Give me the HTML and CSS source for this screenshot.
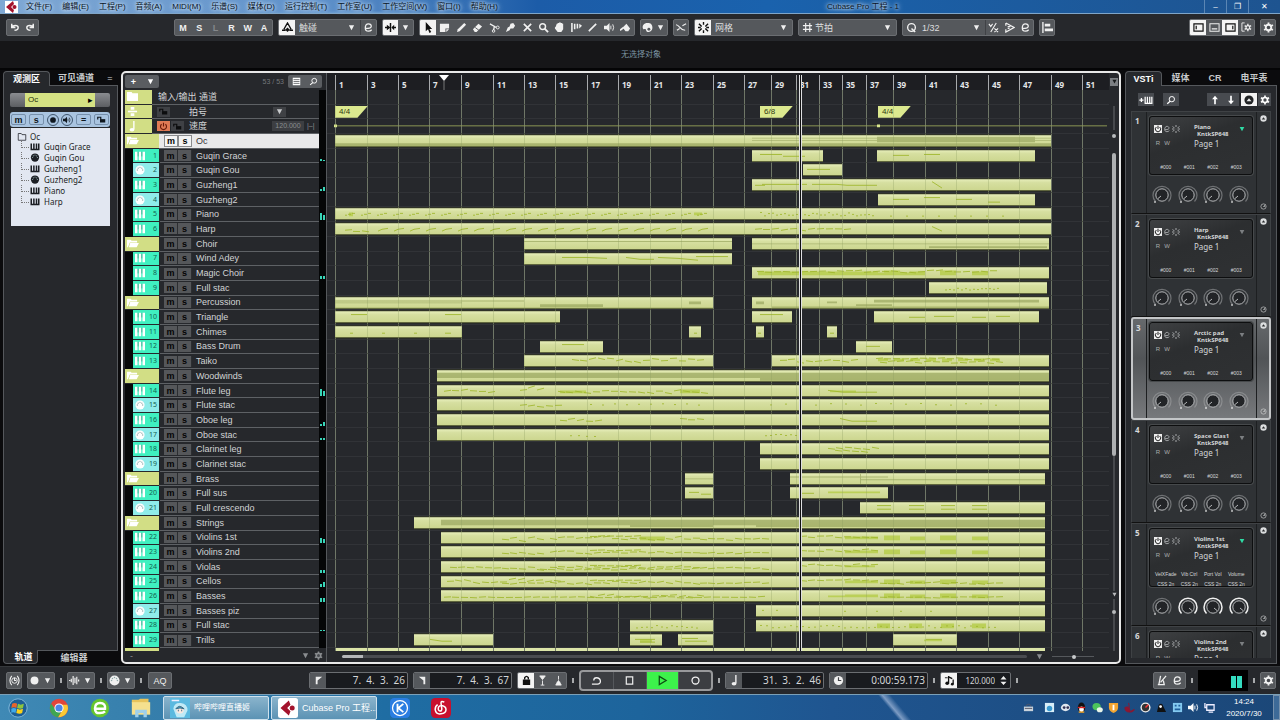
FILE: index.html
```html
<!DOCTYPE html>
<html lang="zh-CN">
<head>
<meta charset="utf-8">
<title>Cubase Pro 工程 - 1</title>
<link rel="stylesheet" href="styles.css">
</head>
<body>
<svg class="sprite" aria-hidden="true">
  <symbol id="cubase" viewBox="0 0 12 12"><path d="M7 0 0 6l7 6 1-3-3-3 3-3z" fill="#a3122c"/><circle cx="8.500" cy="6" r="2" fill="#a3122c"/></symbol>
  <symbol id="undo" viewBox="0 0 12 12"><path d="M3 2v4h4M3 6c1-3 7-3 7 0 0 2-1 3-4 3" fill="none" stroke="currentColor" stroke-width="1.600"/></symbol>
  <symbol id="redo" viewBox="0 0 12 12"><path d="M9 2v4H5M9 6C8 3 2 3 2 6c0 2 1 3 4 3" fill="none" stroke="currentColor" stroke-width="1.600"/></symbol>
  <symbol id="auto" viewBox="0 0 12 12"><path d="M2 8 6 1l4 7M0 9h4M8 9h4" fill="none" stroke="currentColor" stroke-width="1.400"/><path d="M6 6l2.500 2.500L6 11 3.500 8.500z" fill="currentColor"/></symbol>
  <symbol id="edit" viewBox="0 0 12 12"><path d="M3 7c5 0 6-1 6-2.500S7.500 2 6 2C4 2 2.500 4 2.500 6.500S4 10 6 10c1.500 0 2.500-.5 3.500-1.500" fill="none" stroke="currentColor" stroke-width="1.400"/></symbol>
  <symbol id="scroll" viewBox="0 0 12 12"><path d="M6 1v10M0 6h4M8 6h4" stroke="currentColor" stroke-width="1.600"/><path d="M2 3l4 3-4 3zM10 3v6L7 6z" fill="currentColor"/></symbol>
  <symbol id="down" viewBox="0 0 12 12"><path d="M2.500 3h7L6 9.500z" fill="currentColor"/></symbol>
  <symbol id="up" viewBox="0 0 12 12"><path d="M6 1 2.500 5H5v6h2V5h2.500z" fill="currentColor"/></symbol>
  <symbol id="dn" viewBox="0 0 12 12"><path d="M6 11 2.500 7H5V1h2v6h2.500z" fill="currentColor"/></symbol>
  <symbol id="arrow" viewBox="0 0 12 12"><path d="M3 0v10l2.500-2 1.500 4 2-1-2-3.500h3z" fill="currentColor"/></symbol>
  <symbol id="range" viewBox="0 0 12 12"><path d="M1 2h10v5H7v4H1z" fill="currentColor"/><path d="M8 8h3L8 11z" fill="currentColor"/></symbol>
  <symbol id="pencil" viewBox="0 0 12 12"><path d="M1 11l1-3 7-7 2 2-7 7z" fill="currentColor"/></symbol>
  <symbol id="eraser" viewBox="0 0 12 12"><path d="M1 8l6-6 4 3-6 6H3z" fill="currentColor"/><path d="M3.500 6l4 3" stroke="#55585c"/></symbol>
  <symbol id="cut" viewBox="0 0 12 12"><path d="M1 2l7 4M5 9l1-5" fill="none" stroke="currentColor" stroke-width="1.400"/><circle cx="9.500" cy="6" r="1.600" fill="none" stroke="currentColor"/><circle cx="5" cy="9.800" r="1.400" fill="none" stroke="currentColor"/></symbol>
  <symbol id="glue" viewBox="0 0 12 12"><path d="M1 11l2-5 2-1 1-3 3-1 2 3-2 3-3 0-1 2z" fill="currentColor"/></symbol>
  <symbol id="mute" viewBox="0 0 12 12"><path d="M2 2l8 8M10 2l-8 8" stroke="currentColor" stroke-width="1.800"/></symbol>
  <symbol id="lens" viewBox="0 0 12 12"><circle cx="5" cy="5" r="3.200" fill="none" stroke="currentColor" stroke-width="1.600"/><path d="M7 7l4 4" stroke="currentColor" stroke-width="2"/></symbol>
  <symbol id="find" viewBox="0 0 12 12"><circle cx="7" cy="5" r="3.200" fill="none" stroke="currentColor" stroke-width="1.200"/><path d="M5 7.500l-3.500 3" stroke="currentColor" stroke-width="1.400"/></symbol>
  <symbol id="hand" viewBox="0 0 12 12"><path d="M2 5l1-3h1V1h2V0h1v1h2v1h1v6L8 11H4L1 7V6z" fill="currentColor"/></symbol>
  <symbol id="comp" viewBox="0 0 12 12"><path d="M1 1v10M4 2v6M7 2v5" stroke="currentColor" stroke-width="1.700"/><path d="M9 2l3 2-3 3z" fill="currentColor"/></symbol>
  <symbol id="line" viewBox="0 0 12 12"><path d="M2 10l8-8" stroke="currentColor" stroke-width="1.800"/></symbol>
  <symbol id="sound" viewBox="0 0 12 12"><path d="M0 4h3l3-3v10L3 8H0z" fill="currentColor"/><path d="M7.500 4v4M9.500 2.500q2 3.500 0 7" stroke="currentColor" fill="none"/></symbol>
  <symbol id="bucket" viewBox="0 0 12 12"><path d="M3 6l4-4 4 5-2 3-3 0z" fill="currentColor"/><path d="M0 9l4-3" stroke="currentColor" stroke-width="1.800"/></symbol>
  <symbol id="palette" viewBox="0 0 12 12"><path d="M6 1C2 1 0 4 1 7c1 2 2 0 3 1s0 3 3 3c4-1 5-4 4-7S8 1 6 1z" fill="currentColor"/><circle cx="7.500" cy="8" r="1.600" fill="#55585c"/></symbol>
  <symbol id="xfade" viewBox="0 0 12 12"><path d="M0 3c4 0 4 6 10 6M1 9l3-2M7 4l4-2" fill="none" stroke="currentColor" stroke-width="1.300"/></symbol>
  <symbol id="snap" viewBox="0 0 12 12"><path d="M6 0v3M6 9v3M1 2l3 3M11 2L8 5M1 10l3-3M11 10L8 7M0 6h3M9 6h3" stroke="currentColor" stroke-width="1.500"/></symbol>
  <symbol id="grid" viewBox="0 0 12 12"><path d="M4 1v10M8.500 1v10M1 4h10M1 8h10" stroke="currentColor" stroke-width="1.300"/></symbol>
  <symbol id="quant" viewBox="0 0 12 12"><circle cx="6" cy="6" r="4.200" fill="none" stroke="currentColor" stroke-width="1.500"/><path d="M6 7l4 4" stroke="currentColor" stroke-width="1.600"/></symbol>
  <symbol id="iter" viewBox="0 0 12 12"><path d="M3 11l6-10M1 2l2 3 2-3M7 7l4 4M11 7l-4 4" fill="none" stroke="currentColor" stroke-width="1.200"/></symbol>
  <symbol id="groove" viewBox="0 0 12 12"><path d="M2 1l9 5-9 5V8M2 1v3M4 5h3M4 7h2" fill="none" stroke="currentColor" stroke-width="1.300"/></symbol>
  <symbol id="align" viewBox="0 0 12 12"><path d="M1 0v12" stroke="currentColor" stroke-width="1.500"/><path d="M3 2h6v3H3zM3 7h9v3H3z" fill="currentColor"/></symbol>
  <symbol id="zl" viewBox="0 0 12 12"><path d="M1 2h10v8H1zM3.500 4v4" fill="none" stroke="currentColor" stroke-width="1.300"/></symbol>
  <symbol id="zb" viewBox="0 0 12 12"><path d="M1 2h10v8H1zM3 7.500h6" fill="none" stroke="currentColor" stroke-width="1.100"/></symbol>
  <symbol id="zr" viewBox="0 0 12 12"><path d="M1 2h10v8H1zM8.500 4v4" fill="none" stroke="currentColor" stroke-width="1.300"/></symbol>
  <symbol id="zset" viewBox="0 0 12 12"><path d="M4 1H1v9h3" fill="none" stroke="currentColor"/><path d="M7.500 2v8M4 4l7 4M4 8l7-4" stroke="currentColor" stroke-width="1.500"/><circle cx="7.500" cy="6" r="2" fill="#55585c" stroke="currentColor" stroke-width="1.200"/></symbol>
  <symbol id="gear" viewBox="0 0 12 12"><path d="M6 0.500v11M1.200 3.200l9.600 5.600M1.200 8.800l9.600-5.600" stroke="currentColor" stroke-width="2"/><circle cx="6" cy="6" r="3" fill="#484b50" stroke="currentColor" stroke-width="2"/></symbol>
  <symbol id="list" viewBox="0 0 12 12"><path d="M1 1h10v10H1z" fill="currentColor"/><path d="M2 3.500h8M2 6h8M2 8.500h8" stroke="#4a4c50"/></symbol>
  <symbol id="keys" viewBox="0 0 12 12"><path d="M0 1h3v10H0zM4.500 1h3v10h-3zM9 1h3v10H9z" fill="currentColor"/><path d="M3.700 1v5.500M8.200 1v5.500" stroke="#0b0b0b" stroke-opacity=".35"/></symbol>
  <symbol id="bkeys" viewBox="0 0 12 12"><path d="M1 2v8h10V2M4.500 2v8M8 2v8" fill="none" stroke="currentColor" stroke-width="2"/></symbol>
  <symbol id="addkeys" viewBox="0 0 16 12"><path d="M0 6h5M2.500 3.500v5M7 2v8h8V2M9.700 2v8M12.500 2v8" fill="none" stroke="currentColor" stroke-width="1.500"/></symbol>
  <symbol id="midi" viewBox="0 0 12 12"><circle cx="6" cy="6" r="5.500" fill="currentColor"/><g fill="#8fa8a8"><circle cx="2.800" cy="6" r=".8"/><circle cx="3.800" cy="3.800" r=".8"/><circle cx="6" cy="2.800" r=".8"/><circle cx="8.200" cy="3.800" r=".8"/><circle cx="9.200" cy="6" r=".8"/></g></symbol>
  <symbol id="folder" viewBox="0 0 14 12"><path d="M1 2h4l1 1h6v2H4l-2 5H1z" fill="currentColor"/><path d="M4.500 5.500H14L11.500 10H3z" fill="currentColor"/></symbol>
  <symbol id="closed" viewBox="0 0 14 12"><path d="M1 1h5l1 1.500h6V11H1z" fill="currentColor"/></symbol>
  <symbol id="ofolder" viewBox="0 0 12 12"><path d="M1 2h4l1 1.500h5V11H1z" fill="none" stroke="currentColor"/></symbol>
  <symbol id="sig" viewBox="0 0 12 12"><path d="M1 6h10" stroke="currentColor" stroke-width="1.800"/><path d="M4 1h4v3H4zM4 8h4v3H4z" fill="currentColor"/></symbol>
  <symbol id="note" viewBox="0 0 12 12"><path d="M7.500 0v9" stroke="currentColor" stroke-width="1.500"/><ellipse cx="5.500" cy="9.500" rx="2.600" ry="2" fill="currentColor"/></symbol>
  <symbol id="notes" viewBox="0 0 12 12"><path d="M5 1v8M5 2l4 2M10 5v5" stroke="currentColor" stroke-width="1.400"/><circle cx="3.500" cy="9" r="2" fill="currentColor"/><circle cx="9" cy="10" r="1.500" fill="currentColor"/><path d="M1 3h3" stroke="currentColor"/></symbol>
  <symbol id="unlock" viewBox="0 0 12 12"><path d="M1 6V3h4v3" fill="none" stroke="currentColor" stroke-width="1.600"/><path d="M4 5.500h7V10H4z" fill="currentColor"/></symbol>
  <symbol id="lock" viewBox="0 0 12 12"><path d="M2 5h8v6H2z" fill="currentColor"/><path d="M4 5V3q2-3 4 0v2" fill="none" stroke="currentColor" stroke-width="1.500"/></symbol>
  <symbol id="power" viewBox="0 0 12 12"><path d="M6 1v5M3.500 3A4 4 0 1 0 8.500 3" fill="none" stroke="currentColor" stroke-width="1.500"/></symbol>
  <symbol id="wave" viewBox="0 0 12 12"><path d="M0 6h1.500M2.500 4v4M4.500 1v10M6.500 3v6M8.500 2v8M10.500 5v2" stroke="currentColor" stroke-width="1.300"/></symbol>
  <symbol id="sync" viewBox="0 0 12 12"><path d="M3 1Q-1 6 3 11M9 1q4 5 0 10M6 3v3h2" fill="none" stroke="currentColor" stroke-width="1.200"/><circle cx="6" cy="6" r="3" fill="none" stroke="currentColor"/></symbol>
  <symbol id="dot" viewBox="0 0 12 12"><circle cx="6" cy="6" r="4.300" fill="currentColor"/></symbol>
  <symbol id="locl" viewBox="0 0 12 12"><path d="M3 2h7L5 6v4H3z" fill="currentColor"/></symbol>
  <symbol id="locr" viewBox="0 0 12 12"><path d="M9 2H2l5 4v4h2z" fill="currentColor"/></symbol>
  <symbol id="pin" viewBox="0 0 12 12"><path d="M3 1h6L6 5zM6 6v5M4 11h4" stroke="currentColor" fill="currentColor"/></symbol>
  <symbol id="pout" viewBox="0 0 12 12"><path d="M3 11h6L6 6zM6 5V1M4 8h4" stroke="currentColor" fill="currentColor"/></symbol>
  <symbol id="cycle" viewBox="0 0 12 12"><path d="M1 10h6c5 0 4-7-1-7-2 0-3 1-3 3" fill="none" stroke="currentColor" stroke-width="1.400"/></symbol>
  <symbol id="stop" viewBox="0 0 12 12"><path d="M2.500 2h7v8h-7z" fill="none" stroke="currentColor" stroke-width="1.300"/></symbol>
  <symbol id="play" viewBox="0 0 12 12"><path d="M2.500 1.500 10 6l-7.500 4.500z" fill="none" stroke="currentColor" stroke-width="1.400"/></symbol>
  <symbol id="rec" viewBox="0 0 12 12"><circle cx="6" cy="6" r="3.800" fill="none" stroke="currentColor" stroke-width="1.400"/></symbol>
  <symbol id="clock" viewBox="0 0 12 12"><circle cx="6" cy="6" r="5" fill="currentColor"/><path d="M6 2.500V6h3" stroke="#404246" stroke-width="1.300" fill="none"/></symbol>
  <symbol id="metro" viewBox="0 0 12 12"><path d="M3 11 5 1M2 10.500h7L8 6M5 8l6-7" fill="none" stroke="currentColor" stroke-width="1.400"/></symbol>
  <symbol id="updown" viewBox="0 0 12 12"><path d="M6 0l4 4.500H2zM6 12l4-4.500H2z" fill="currentColor"/></symbol>
  <symbol id="cap" viewBox="0 0 12 12"><circle cx="6" cy="6" r="5.500" fill="currentColor"/><path d="M3 7.500h6L6 4z" fill="#eceded"/></symbol>
  <symbol id="capw" viewBox="0 0 12 12"><circle cx="6" cy="6" r="5.500" fill="currentColor"/><path d="M3 7.500h6L6 4z" fill="#2b2d2f"/></symbol>
  <symbol id="turn" viewBox="0 0 12 12"><circle cx="6" cy="6" r="4.500" fill="none" stroke="currentColor"/><path d="M6 6l3-3M6 6h3" stroke="currentColor"/></symbol>
  <symbol id="knob" viewBox="0 0 20 20"><path d="M3.500 16.500a9 9 0 1 1 13 0" fill="none" stroke="currentColor" stroke-width="1.200" opacity=".55"/><circle cx="10" cy="10" r="6.200" fill="#222427" stroke="#b8babc"/><path d="M9 11l-3 2.500" stroke="#b8babc"/><path d="M2 17h2" stroke="#fff"/></symbol>
  <symbol id="knobfull" viewBox="0 0 20 20"><path d="M3.500 16.500a9 9 0 1 1 13 0" fill="none" stroke="#f0f0f0" stroke-width="1.500"/><circle cx="10" cy="10" r="6.200" fill="#222427" stroke="#b8babc"/><path d="M11 11l3 2.500" stroke="#b8babc"/></symbol>
</svg>

<header class="titlebar">
  <span class="logo"><svg><use href="#cubase"/></svg></span>
  <nav class="menu" id="menu"></nav>
  <h1>Cubase Pro 工程 - 1</h1>
  <div class="wincontrols"><button aria-label="最小化">–</button><button aria-label="还原">❐</button><button aria-label="关闭">✕</button></div>
</header>

<div class="toolbar">
  <div class="group g-undo"><button aria-label="撤销"><svg><use href="#undo"/></svg></button><button aria-label="重做"><svg><use href="#redo"/></svg></button></div>
  <div class="group g-state"><button>M</button><button>S</button><button class="off">L</button><button>R</button><button>W</button><button>A</button></div>
  <div class="group g-wide"><button class="on" aria-label="自动化"><svg><use href="#auto"/></svg></button><select aria-label="自动化模式"><option>触碰</option></select><svg><use href="#down"/></svg><button class="sep" aria-label="编辑"><svg><use href="#edit"/></svg></button></div>
  <div class="group g-scroll"><button class="on" aria-label="自动滚动"><svg><use href="#scroll"/></svg></button><button aria-label="滚动选项"><svg><use href="#down"/></svg></button></div>
  <div class="group g-tools" id="tools"></div>
  <div class="group g-color"><button aria-label="颜色"><svg><use href="#palette"/></svg></button><button aria-label="颜色菜单"><svg><use href="#down"/></svg></button></div>
  <div class="group g-one"><button aria-label="过零点"><svg><use href="#xfade"/></svg></button></div>
  <div class="group g-wide"><button class="on" aria-label="吸附"><svg><use href="#snap"/></svg></button><select aria-label="吸附类型"><option>网格</option></select><svg><use href="#down"/></svg></div>
  <div class="group g-wide tight"><button aria-label="网格类型图标"><svg><use href="#grid"/></svg></button><select aria-label="网格类型"><option>节拍</option></select><svg><use href="#down"/></svg></div>
  <div class="group g-quant"><button aria-label="量化"><svg><use href="#quant"/></svg></button><select aria-label="量化值"><option>1/32</option></select><svg><use href="#down"/></svg><button class="sep" aria-label="迭代量化"><svg><use href="#iter"/></svg></button><button aria-label="应用量化"><svg><use href="#groove"/></svg></button><button aria-label="量化面板"><svg><use href="#edit"/></svg></button></div>
  <div class="group g-one"><button aria-label="对齐"><svg><use href="#align"/></svg></button></div>
  <div class="group g-zones"><button class="on" aria-label="左区"><svg><use href="#zl"/></svg></button><button aria-label="下区"><svg><use href="#zb"/></svg></button><button class="on" aria-label="右区"><svg><use href="#zr"/></svg></button><button aria-label="区域设置"><svg><use href="#zset"/></svg></button></div>
  <div class="group g-one"><button aria-label="设置"><svg><use href="#gear"/></svg></button></div>
</div>

<div class="infoline">无选择对象</div>

<main class="work">
  <aside class="side inspector">
    <div class="tabs"><button class="tab active">观测区</button><button class="tab">可见通道</button><button class="more" aria-label="更多">=</button></div>
    <div class="side-body">
      <button class="track-name"><span>Oc</span><span class="tri">▸</span></button>
      <div class="track-ctl">
        <button class="cap">m</button><button class="cap">s</button><button class="round" aria-label="录音"><svg><use href="#dot"/></svg></button><button class="round" aria-label="监听"><svg><use href="#sound"/></svg></button><button class="cap">=</button><button class="cap" aria-label="锁定"><svg><use href="#unlock"/></svg></button>
      </div>
      <ul class="tree">
        <li class="root"><svg><use href="#ofolder"/></svg>Oc</li>
        <li><svg><use href="#bkeys"/></svg>Guqin Grace</li>
        <li><svg><use href="#midi"/></svg>Guqin Gou</li>
        <li><svg><use href="#bkeys"/></svg>Guzheng1</li>
        <li><svg><use href="#midi"/></svg>Guzheng2</li>
        <li><svg><use href="#bkeys"/></svg>Piano</li>
        <li><svg><use href="#bkeys"/></svg>Harp</li>
      </ul>
    </div>
    <div class="tabs bottom"><button class="tab active">轨道</button><button class="tab">编辑器</button></div>
  </aside>

  <section class="project">
    <div class="list-head">
      <div class="chip"><button aria-label="添加轨道">+</button><button aria-label="添加轨道菜单"><svg><use href="#down"/></svg></button></div>
      <span class="count">53 / 53</span>
      <div class="chip"><button aria-label="轨道可见性"><svg><use href="#list"/></svg></button><button aria-label="查找轨道"><svg><use href="#find"/></svg></button></div>
    </div>
    <div class="ruler" id="ruler"></div>
    <div class="corner"><button aria-label="标尺菜单"><svg><use href="#down"/></svg></button></div>
    <div class="tracks" id="tracks"></div>
    <div class="lanes" id="lanes"></div>
    <div class="vscroll"><i class="seg top"></i><i class="seg bead"></i><i class="seg thumb"></i><i class="seg rest"></i><svg><use href="#down"/></svg><i class="seg short"></i><i class="seg bead end"></i><i class="seg tail"></i></div>
    <div class="list-foot"><span>-</span><svg><use href="#down"/></svg><svg><use href="#gear"/></svg></div>
    <div class="hscroll"><i></i><svg><use href="#down"/></svg><input type="range" aria-label="水平缩放" value="52"></div>
  </section>

  <aside class="side rack">
    <div class="tabs"><button class="tab active">VSTi</button><button class="tab">媒体</button><button class="tab">CR</button><button class="tab">电平表</button></div>
    <div class="side-body">
      <div class="rack-tools">
        <button class="wide" aria-label="添加乐器"><svg><use href="#addkeys"/></svg></button><button aria-label="查找"><svg><use href="#find"/></svg></button>
        <button class="push" aria-label="上一个"><svg><use href="#up"/></svg></button><button aria-label="下一个"><svg><use href="#dn"/></svg></button><button class="on" aria-label="显示控制"><svg><use href="#cap"/></svg></button><button class="cog" aria-label="设置"><svg><use href="#gear"/></svg></button>
      </div>
      <div class="slots" id="slots"></div>
    </div>
  </aside>
</main>

<footer class="transport">
  <div class="group g-one"><button aria-label="约束延迟补偿"><svg><use href="#sync"/></svg></button></div>
  <div class="group g-color"><button aria-label="录音模式"><svg><use href="#dot"/></svg></button><button aria-label="录音模式菜单"><svg><use href="#down"/></svg></button></div><i class="tick"></i>
  <div class="group g-color"><button aria-label="音频录音"><svg><use href="#wave"/></svg></button><button aria-label="音频录音菜单"><svg><use href="#down"/></svg></button></div><i class="tick"></i>
  <div class="group g-color"><button aria-label="MIDI录音"><svg><use href="#midi"/></svg></button><button aria-label="MIDI录音菜单"><svg><use href="#down"/></svg></button></div><i class="tick"></i>
  <div class="group g-aq"><button>AQ</button></div>
  <div class="group display first"><button aria-label="左定位"><svg><use href="#locl"/></svg></button><input aria-label="左定位点" value="7.  4.  3.  26"></div>
  <div class="group display"><button aria-label="右定位"><svg><use href="#locr"/></svg></button><input aria-label="右定位点" value="7.  4.  3.  67"></div>
  <div class="group g-punch"><button class="on" aria-label="锁定"><svg><use href="#lock"/></svg></button><button aria-label="切入"><svg><use href="#pin"/></svg></button><button aria-label="切出"><svg><use href="#pout"/></svg></button></div><i class="tick"></i>
  <div class="group g-play"><button aria-label="循环"><svg><use href="#cycle"/></svg></button><button aria-label="停止"><svg><use href="#stop"/></svg></button><button class="go" aria-label="播放"><svg><use href="#play"/></svg></button><button aria-label="录音"><svg><use href="#rec"/></svg></button></div><i class="tick"></i>
  <div class="group display"><button aria-label="小节与拍"><svg><use href="#note"/></svg></button><input aria-label="主时间" value="31.  3.  2.  46"></div>
  <div class="group display"><button aria-label="秒"><svg><use href="#clock"/></svg></button><input aria-label="副时间" value="0:00:59.173"></div><i class="tick"></i>
  <div class="group display tempo"><button class="on" aria-label="速度轨"><svg><use href="#notes"/></svg></button><input aria-label="速度" value="120.000"><svg><use href="#updown"/></svg></div><i class="tick"></i>
  <div class="group g-undo push"><button aria-label="节拍器"><svg><use href="#metro"/></svg></button><button aria-label="节拍器设置"><svg><use href="#edit"/></svg></button></div><i class="tick"></i>
  <div class="level"><i></i><i></i></div><i class="tick"></i>
  <div class="group g-one"><button aria-label="走带设置"><svg><use href="#gear"/></svg></button></div>
</footer>

<div class="taskbar">
  <button class="app" aria-label="开始"><svg viewBox="0 0 24 24"><circle cx="12" cy="12" r="11" fill="#1d5f95" stroke="#8fc3e2"/><path d="M5 7q3-2 6 0l-1 5q-3-2-6 0z" fill="#e8642b"/><path d="M12 7q3 2 7 0l-1 5q-3 2-7 0z" fill="#8cc63f"/><path d="M4 13q3-2 6 0l-1 5q-3-2-5 0z" fill="#3fa9e8"/><path d="M11 13q3 2 7 0l-1 5q-3 2-7 0z" fill="#fcd116"/></svg></button>
  <button class="app" aria-label="Chrome"><svg viewBox="0 0 24 24"><circle cx="12" cy="12" r="11" fill="#e0453a"/><path d="M2.500 6.500A11 11 0 0 0 11 23l5-9-8 0z" fill="#3fa652"/><path d="M11 23A11 11 0 0 0 22 8H12l4.500 6z" fill="#fbc934"/><circle cx="12" cy="12" r="5.500" fill="#fff"/><circle cx="12" cy="12" r="4.300" fill="#4a86e8"/></svg></button>
  <button class="app" aria-label="浏览器"><svg viewBox="0 0 24 24"><circle cx="12" cy="12" r="11" fill="#66c62e"/><path d="M5 13h13q1-7-6-7-6 0-6 6.500T12 18q4 0 6-2" fill="none" stroke="#fff" stroke-width="3"/></svg></button>
  <button class="app" aria-label="资源管理器"><svg viewBox="0 0 24 24"><path d="M1 2h8l2-1h10v5H1z" fill="#e8c35a"/><path d="M1 5h22v15H1z" fill="#f5e08e"/><path d="M5 23v-9h14v9h-4v-5H9v5z" fill="#9fd0ea"/></svg></button>
  <button class="window"><svg viewBox="0 0 24 24"><path d="M0 0h24v24H0z" fill="#5ab9df"/><path d="M2 2h9v2H2z" fill="#eef"/><path d="M4 13Q5 5 13 6t8 9l-4 8H8z" fill="#bfeaf6"/><circle cx="12" cy="14" r="4.500" fill="#fce8df"/><path d="M7 13q4-6 10 0-5-2-10 0M10 14v2M14 14v2" stroke="#24607e" fill="#4d9fc0"/></svg>哔哩哔哩直播姬</button>
  <button class="window"><svg viewBox="0 0 24 24"><rect width="24" height="24" rx="3" fill="#fff"/><path d="M13 3 3 12l10 9 2-5-4-4 4-4z" fill="#a3122c"/><circle cx="17" cy="12" r="3" fill="#a3122c"/></svg>Cubase Pro 工程...</button>
  <button class="app" aria-label="酷狗音乐"><svg viewBox="0 0 24 24"><rect width="24" height="24" rx="5" fill="#2a7de1"/><circle cx="12" cy="12" r="9" fill="none" stroke="#fff" stroke-width="1.500"/><path d="M9 7v10M16 7l-6 5 6 5" fill="none" stroke="#fff" stroke-width="2.200"/></svg></button>
  <button class="app" aria-label="网易云音乐"><svg viewBox="0 0 24 24"><rect width="24" height="24" rx="5" fill="#c8102e"/><path d="M16 5q-4-2-4 1l1 7q0 3-2.500 2.500T9 11q1-2 4-2 5 1 5 5t-6 5-7-5q0-4 3-6" fill="none" stroke="#fff" stroke-width="1.800"/></svg></button>
  <div class="tray">
    <svg viewBox="0 0 12 12"><path d="M1 5h10v5H1z" fill="#c9d3dc"/><path d="M2 7h8M3 4q3-3 6 0" stroke="#556" fill="none"/></svg>
    <svg viewBox="0 0 12 12"><path d="M1 1h10v10H1z" fill="#d8eef8"/><circle cx="6" cy="7" r="3" fill="#3a9ad0"/></svg>
    <svg viewBox="0 0 12 12"><ellipse cx="6" cy="6" rx="5" ry="4" fill="#dfe6ee"/><circle cx="4.500" cy="6" r="1.500" fill="#335"/><circle cx="8.500" cy="6" r="1.500" fill="#335"/></svg>
    <svg viewBox="0 0 12 12"><ellipse cx="6" cy="6" rx="4" ry="5.500" fill="#111"/><ellipse cx="6" cy="8" rx="2.500" ry="3" fill="#fff"/><path d="M2 6h8" stroke="#d22" stroke-width="1.500"/><path d="M3 11h6" stroke="#f5a623" stroke-width="1.500"/></svg>
    <svg viewBox="0 0 12 12"><ellipse cx="5" cy="5" rx="4.500" ry="4" fill="#4cc35b"/><ellipse cx="8.500" cy="8.500" rx="3.300" ry="2.800" fill="#e8f5e8"/></svg>
    <svg viewBox="0 0 12 12"><path d="M1 1h10v5q0 4-5 6-5-2-5-6z" fill="#f2a531"/><path d="M6 3v6" stroke="#fff" stroke-width="2"/></svg>
    <svg viewBox="0 0 12 12"><path d="M5 1l1 5M1 6q5-2 5 2t5 0q0 3-5 3T1 6z" fill="#8d1630" stroke="#8d1630"/></svg>
    <svg viewBox="0 0 12 12"><circle cx="6" cy="6" r="5.500" fill="#eee"/><circle cx="6" cy="6" r="4" fill="#333"/><path d="M6 6l3-3" stroke="#f33" stroke-width="1.500"/></svg>
    <svg viewBox="0 0 12 12"><path d="M1 11 3 3q4-3 5 2l3 6z" fill="#111"/><circle cx="5" cy="5" r="1.500" fill="#fff"/></svg>
    <svg viewBox="0 0 12 12"><path d="M1 1h10v10H1z" fill="#83c9f0"/><path d="M3 3h2v2H3zM7 3h2v2H7zM3 7h6v2H3z" fill="#1f5f9c"/></svg>
    <svg><use href="#sound"/></svg>
    <svg viewBox="0 0 12 12"><path d="M3 3h8v6H3zM5 11h5M1 1v5h2" fill="none" stroke="#eef" stroke-width="1.400"/></svg>
  </div>
  <time class="clock"><span>14:24</span><span>2020/7/30</span></time>
  <span class="peek"></span>
</div>
<script src="app.js"></script>
</body>
</html>
```

FILE: styles.css
```css
* { box-sizing: border-box; }
html, body { height: 100%; margin: 0; }
body {
  display: flex; flex-direction: column; overflow: hidden;
  background: #0b0b0d; color: #d6d8da;
  font: 9px/12px "Liberation Sans", "Noto Sans CJK SC", sans-serif;
}
button, input, select { font: inherit; color: inherit; background: none; border: 0; padding: 0; margin: 0; border-radius: 0; }
button { display: flex; align-items: center; justify-content: center; }
svg { width: 12px; height: 12px; flex: none; display: block; }
.sprite { position: absolute; width: 0; height: 0; }

/* title bar */
.titlebar {
  position: relative; display: flex; align-items: center; height: 14px; flex: none;
  background: radial-gradient(ellipse at 27% 100%, #6c9ed2 0, transparent 12%), radial-gradient(ellipse at 80% 100%, #6db4f4 0, transparent 3%), linear-gradient(90deg, #7fa8d4 0, #5f91ca 25%, #1c5ca8 42%, #1a62ad 60%, #1e5490 100%);
  border-bottom: 1px solid #7fa5c8; color: #07131f; font-size: 8px;
}
.logo { width: 13px; height: 12px; margin: 0 8px 0 5px; background: #fff; display: flex; justify-content: center; }
.menu { display: flex; gap: 10px; }
.menu button, .titlebar h1 { text-shadow: 0 0 3px #d5e6f7, 0 0 5px #b5d0ec, 0 0 6px #b5d0ec; white-space: nowrap; }
.titlebar h1 { position: absolute; left: 0; right: 0; text-align: center; padding-left: 446px; margin: 0; font: inherit; pointer-events: none; }
.wincontrols { margin-left: auto; display: flex; color: #fff; }
.wincontrols button { width: 22px; height: 13px; border-left: 1px solid #5b86b4; }
.wincontrols button:last-child { width: 32px; }

/* grouped buttons, shared by the toolbar and the transport */
.toolbar, .transport { display: flex; align-items: center; background: #26282c; flex: none; }
.toolbar { gap: 5px; height: 27px; padding: 0 4px 0 6px; }
.group { display: flex; align-items: stretch; height: 17px; background: #55585c; border: 1px solid #6b6e72; border-radius: 2px; color: #f0f0f0; overflow: hidden; }
.group button { flex: 1; }
.group button svg { width: 11px; height: 11px; }
.group > svg { align-self: center; width: 9px; height: 9px; }
.group .on { background: #f4f4f4; color: #111; }
.group .off { color: #85888c; }
.group .sep { border-left: 1px solid #404246; }
.g-undo { width: 33px; }
.g-state { width: 99px; margin-left: 130px; font-weight: bold; }
.g-wide { width: 99px; }
.g-wide button, .g-quant button { flex: 0 0 16px; }
.g-wide select, .g-quant select { flex: 1; appearance: none; padding-left: 4px; min-width: 0; color: #dcdedf; }
.g-quant select { padding-left: 3px; }
.tight select { padding-left: 0; }
.g-wide > svg, .g-quant > svg { margin-right: 4px; }
.g-scroll { width: 32px; }
.g-tools { width: 216px; }
.g-color { width: 28px; }
.group.g-color button + button svg, .group.g-scroll button + button svg { width: 9px; height: 9px; }
.g-one { width: 16px; }
.g-quant { width: 132px; }
.g-zones { width: 66px; margin-left: auto; }
.push { margin-left: auto; }

.infoline { flex: none; height: 29px; display: flex; align-items: center; justify-content: center; padding-left: 2px; background: #161618; border-bottom: 2px solid #050506; color: #7d95a3; font-size: 8px; }

/* work area */
.work { flex: 1; min-height: 0; display: grid; grid-template-columns: 115px minmax(0, 1fr) 152px; column-gap: 4px; padding: 1px 3px 0; }
.side { display: flex; flex-direction: column; min-height: 0; }
.side-body { flex: 1; min-height: 0; border: 1px solid #55585c; border-top: 0; background: #26282c; padding: 7px 7px 7px 6px; }
.tabs { display: flex; height: 15px; flex: none; }
.tab { flex: 1; font-size: 9px; font-weight: bold; color: #c8cacc; border-bottom: 1px solid #55585c; white-space: nowrap; }
.tab.active { flex: 0 0 auto; background: #26282c; color: #fff; border: 1px solid #55585c; border-bottom: 0; border-radius: 4px 4px 0 0; }
.inspector .tab.active { width: 47px; }
.inspector .more { width: 16px; border-bottom: 1px solid #55585c; }
.bottom { height: 14px; }
.bottom .tab { border-bottom: 0; flex: 1; border-top: 1px solid #55585c; padding-right: 8px; }
.inspector .bottom .tab.active { width: 35px; flex: 0 0 35px; border: 1px solid #55585c; border-top: 0; border-radius: 0 0 4px 4px; padding: 0 0 0 6px; }
.inspector .side-body { border-bottom: 0; }
.track-name { width: 100%; height: 14px; background: linear-gradient(#8a8c90, #5c5e62); border-radius: 2px; padding: 0 15px; color: #26300a; }
.track-name span { background: #d5e283; height: 14px; line-height: 14px; }
.track-name span:first-child { flex: 1; text-align: left; padding-left: 3px; font-size: 8px; }
.tri { width: 10px; color: #000; }
.track-ctl { display: flex; justify-content: space-between; align-items: center; margin-top: 5px; height: 15px; background: #a9c4e0; border-radius: 3px; padding: 0 1px; color: #101820; }
.track-ctl .cap { width: 15px; height: 11px; border: 1px solid #7690ac; border-radius: 2px; font-weight: bold; }
.track-ctl svg { width: 9px; height: 9px; }
.round { width: 12px; height: 12px; border: 1px solid #3f566e; border-radius: 50%; }
.track-ctl .round svg { width: 8px; height: 8px; }
.tree { list-style: none; margin: 1px 0 0 1px; padding: 3px 0; height: 98px; background: #e2e7f1; color: #1b1e24; font: 8px/11px "Noto Sans", sans-serif; }
.tree li { display: flex; align-items: center; height: 11px; padding-left: 19px; gap: 4px; position: relative; }
.tree li.root { padding-left: 6px; gap: 3px; height: 10px; }
.tree svg { width: 10px; height: 9px; }
.tree li:not(.root)::before { content: ""; position: absolute; left: 10px; top: 0; width: 7px; height: 6px; border-left: 1px dotted #777; border-bottom: 1px dotted #777; }

/* project window */
.project {
  display: grid; min-width: 0; min-height: 0; position: relative;
  grid-template-columns: 202px minmax(0, 1fr) 10px;
  grid-template-rows: 17px minmax(0, 1fr) 11px;
  margin-left: -1px; border: 2px solid #e8e8e8; border-radius: 5px; background: #26282c; padding-left: 2px;
}
.list-head { display: flex; align-items: center; gap: 4px; padding: 0 4px 0 0; border-right: 1px solid #55585c; }
.chip { display: flex; width: 34px; height: 13px; background: #5a5d61; border-radius: 2px; color: #fff; }
.chip button { flex: 1; font-weight: bold; }
.chip svg { width: 9px; height: 9px; }
.count { margin-left: auto; color: #74777b; font-size: 7px; }
.ruler { position: relative; color: #e4e6e8; font: bold 8px/10px "Noto Sans", sans-serif; background: #1d1e22; overflow: hidden; }
.mark { position: absolute; top: 2px; bottom: 0; border-left: 1px solid #a8aaac; padding: 5px 0 0 3px; }
.locator { position: absolute; top: 2px; width: 10px; height: 16px; margin-left: -5px; }
.corner { display: flex; justify-content: center; align-items: center; }
.corner button { width: 8px; height: 8px; background: #7c7f83; color: #16181a; }
.corner svg { width: 7px; height: 7px; }

.tracks, .lanes { display: grid; grid-template-rows: repeat(38, minmax(0, 1fr)) 3px; min-height: 0; min-width: 0; overflow: hidden; }
.row { display: flex; align-items: stretch; min-height: 0; border-right: 1px solid #55585c; overflow: hidden; background: #26282c; }
.swatch { width: 26px; margin: 0 1px 1px 8px; flex: none; display: flex; align-items: center; justify-content: space-between; padding: 0 2px; background: #3ff0c0; color: #fff; }
.swatch b { font: 7px/10px "Noto Sans", sans-serif; color: #145e50; }
.swatch svg { width: 10px; height: 10px; }
.row.midi .swatch { background: #8fecea; }
.row.track { background: linear-gradient(90deg, #08090a 8px, #26282c 8px); }
.folder .swatch, .global .swatch { width: 34px; margin: 0 0 1px; background: #d2de85; padding-left: 1px; }
.global .swatch { width: 27px; }
.folder .swatch svg, .global .swatch svg { width: 13px; height: 11px; }
.row.sliver .swatch { margin: 0; }
.body { flex: 1; min-width: 0; display: flex; align-items: center; border-bottom: 1px solid #5e6165; padding-left: 4px; white-space: nowrap; }
.folder .body { padding-left: 5px; }
.body .ms { width: 14px; height: 11px; background: #55575a; color: #050505; font-weight: bold; border-right: 1px solid #2c2e31; }
.body .name { margin-left: 4px; color: #d2d4d6; }
.selected .body { background: #e9e9ea; }
.selected .name { color: #303234; }
.selected .ms { background: #f4f4f4; border: 1px solid #8a8c8e; height: 12px; }
.global .body { padding-left: 5px; gap: 1px; }
.global .name { margin-left: 1px; }
.global .cell { width: 13px; height: 10px; background: #3f4145; color: #0c0d0e; }
.global .cell svg { width: 9px; height: 9px; }
.global .cell.hot { background: #e07a55; color: #6a1a08; }
.global .cell + .name { margin-left: 4px; }
.global .cell.lone { margin-left: auto; margin-right: 33px; color: #c8cacc; }
.global .first + .name { margin-left: 18px; }
.tempoval { margin-left: auto; width: 32px; height: 10px; line-height: 10px; background: #3c3e42; color: #8b8e91; text-align: center; font-size: 7px; }
.tempoend { margin: 0 2px; color: #8b8e91; width: 10px; font-size: 7px; }
.meter { width: 7px; background: #050607; display: flex; align-items: flex-end; justify-content: center; gap: 1px; padding-bottom: 2px; }
.meter i { width: 2px; background: #39d6b8; }

.lanes { position: relative; }
.lane { position: relative; z-index: 1; min-height: 0; overflow: hidden; border-bottom: 1px solid #313337; }
.lane > svg, .overlay, .underlay, .strip { width: 100%; height: 100%; }
.underlay, .overlay { position: absolute; left: 0; top: 0; }
.underlay line { stroke: #64676b; }
.overlay { z-index: 2; }
.overlay line { stroke: #8c9a60; stroke-opacity: .3; }
.cursor { position: absolute; z-index: 3; top: 2px; bottom: 0; width: 3px; border: solid #dfe0e2; border-width: 0 1px; background: #111; }
.lanes .cursor { top: 0; }
.flag { position: absolute; top: 1px; width: 33px; height: 12px; padding-left: 4px; background: #dce98f; color: #30380f; font-size: 8px; line-height: 12px; clip-path: polygon(0 0, 100% 0, 68% 100%, 0 100%); }
.ev-note { fill: none; stroke: #9fb72c; stroke-opacity: .9; }
.ev-band { fill: #8f9c55; fill-opacity: .6; }
.ev-soft { fill: #b1ca3c; fill-opacity: .7; }

.vscroll { display: flex; flex-direction: column; align-items: center; padding-top: 16px; min-height: 0; color: #b8babc; }
.vscroll svg { width: 7px; height: 7px; }
.seg { width: 2px; background: #47494d; flex: none; }
.seg.top { height: 24px; }
.seg.bead { width: 4px; height: 4px; border-radius: 50%; background: #b8babc; margin: 4px 0 15px; }
.seg.thumb { width: 4px; flex: 303 0 0; background: #aeb0b2; border-radius: 2px; }
.seg.rest { flex: 135 0 0; }
.seg.short { height: 11px; margin-top: 1px; }
.seg.bead.end { margin: 0; }
.seg.tail { height: 37px; }
.list-foot { display: flex; align-items: center; gap: 4px; border-right: 1px solid #55585c; padding: 0 3px 2px 5px; color: #8a8d90; }
.list-foot span { flex: 1; }
.list-foot svg, .hscroll svg { width: 9px; height: 9px; }
.hscroll { grid-column: 2 / 4; display: flex; align-items: center; gap: 8px; padding: 0 25px 0 15px; color: #8a8d90; }
.hscroll i { flex: 1; height: 3px; border-radius: 2px; background: linear-gradient(90deg, #b4b6b8 21px, #4a4c50 21px); }
.hscroll input { width: 42px; height: 8px; appearance: none; background: linear-gradient(#55585c, #55585c) center / 100% 1px no-repeat; }
.hscroll input::-webkit-slider-thumb { appearance: none; width: 4px; height: 4px; border-radius: 50%; background: #c8cacc; }

/* instrument rack */
.rack .tab { flex: 1 1 auto; }
.rack .tab.active { width: 37px; flex: 0 0 37px; }
.rack .side-body { display: flex; flex-direction: column; padding: 7px 5px 5px; }
.rack-tools { display: flex; height: 13px; flex: none; padding-left: 7px; margin-bottom: 5px; }
.rack-tools button { width: 16px; background: #484b50; color: #fff; }
.rack-tools button:nth-child(2) { margin-left: 9px; }
.rack-tools .push { margin-left: auto; }
.rack-tools .on { background: #f2f2f2; color: #202224; margin-left: 2px; }
.rack-tools .cog { width: 13px; margin-left: 1px; }
.rack-tools svg { width: 10px; height: 10px; }
.rack-tools .wide svg { width: 14px; }
.slots { flex: 1; min-height: 0; overflow: hidden; }
.slot { display: grid; grid-template-columns: 15px 1fr 14px; height: 103px; background: #2f3235; border: 1px solid #3f4245; border-bottom-color: #111; }
.slot.picked { background: linear-gradient(#66696c, #515457 40%, #77797c); border: 2px solid #c4c6c8; border-radius: 3px; grid-template-columns: 14px 1fr 13px; }
.slot .no { font: bold 8px/10px "Noto Sans", sans-serif; padding: 4px 0 0 3px; border-right: 1px solid #1d1f21; }
.slot .end { display: flex; flex-direction: column; justify-content: space-between; align-items: center; padding: 3px 0; border-left: 1px solid #1d1f21; color: #dcdedf; }
.slot .end svg { width: 7px; height: 7px; }
.slot .mid { padding: 4px 3px 0 2px; min-width: 0; }
.screen { height: 59px; border: 1px solid #0d0e0f; border-radius: 3px; background: linear-gradient(160deg, #3f4143, #2c2e30 40%, #2f3133); display: grid; grid-template-columns: 40px 1fr; grid-template-rows: 37px 1fr; padding: 7px 4px 0 4px; box-shadow: 0 0 0 1px #46494b; }
.minis { display: grid; grid-template-columns: repeat(3, 9px); grid-auto-rows: 9px; row-gap: 5px; align-content: start; padding-top: 1px; font-size: 6px; line-height: 8px; color: #a8aaac; }
.minis svg { width: 8px; height: 8px; }
.minis .pw { background: #eee; color: #222; }
.minis span { width: 8px; text-align: center; }
.title { font: bold 6px/7px "Noto Sans", sans-serif; color: #d4d6d8; position: relative; white-space: nowrap; }
.title p { margin: 0; }
.title .syn { padding-left: 3px; }
.title .page { font: 8px/11px "Noto Sans", sans-serif; }
.title svg { position: absolute; right: 2px; top: 1px; width: 8px; height: 8px; color: #7c7f82; }
.title svg.live { color: #2fdca6; }
.params { grid-column: 1 / 3; display: grid; grid-template-columns: repeat(4, 1fr); text-align: center; font: 5px/10px "Liberation Sans", sans-serif; color: #d6d8da; white-space: nowrap; align-content: start; padding-top: 1px; }
.params.two { margin-top: -4px; padding-top: 0; }
.knobs { display: flex; justify-content: space-around; padding: 10px 1px 0 0; color: #a4a6a8; }
.knobs svg { width: 20px; height: 20px; }
.picked .mid { padding-top: 3px; }

/* transport */
.transport { height: 28px; margin-top: 2px; gap: 5px; padding: 0 4px 0 6px; border-top: 1px solid #35383b; }
.tick { width: 2px; height: 5px; background: #a8aaac; }
.g-aq { width: 24px; }
.transport .g-aq { margin-left: 1px; }
.display { width: 99px; background: #191b1f; }
.display.first { margin-left: 132px; }
.display button { flex: 0 0 16px; background: #55585c; }
.display input { flex: 1; min-width: 0; text-align: right; padding-right: 2px; font: 10px/15px "Noto Sans", sans-serif; color: #d4d6d8; white-space: pre; }
.tempo { width: 71px; }
.display.tempo input { font-size: 8px; }
.tempo > svg { margin: 0 2px; }
.g-punch { width: 50px; }
.g-play { width: 134px; height: 21px; border: 2px solid #98999b; border-radius: 4px; background: #3c3e42; }
.g-play button + button { border-left: 1px solid #55585c; }
.g-play .go { background: #3df24b; color: #0e4d14; }
.level { width: 50px; height: 21px; background: #000; display: flex; align-items: flex-end; justify-content: flex-end; gap: 1px; padding: 0 6px 3px 0; }
.level i { width: 5px; height: 12px; background: #35dcc0; }

/* taskbar */
.taskbar { height: 26px; flex: none; display: flex; align-items: center; gap: 2px; padding-left: 2px; color: #fff; border-top: 1px solid #7ba0b8; background: linear-gradient(50deg, transparent 0, transparent 71%, #7d9cc4 72%, transparent 74%) 600px 0 / 400px 100% no-repeat, linear-gradient(90deg, #3f89b5 0, #3179a7 18%, #1f6da3 30%, #1d649c 50%, #1f5590 65%, #1b4778 100%); }
.app { width: 31px; margin-right: 8px; }
.app svg { width: 20px; height: 20px; }
.window { width: 106px; height: 24px; justify-content: flex-start; gap: 4px; padding-left: 6px; background: linear-gradient(#8ab4cc, #5c93b4); border: 1px solid #cfe2ee; border-radius: 2px; white-space: nowrap; overflow: hidden; }
.window:nth-child(5) { font-size: 8px; }
.window svg { width: 20px; height: 20px; }
.app + .window { margin-left: -3px; }
.window + .app { margin-left: 5px; }
.tray { margin-left: auto; display: flex; align-items: center; gap: 5px; }
.tray svg { width: 11px; height: 11px; }
.tray svg:first-child { margin-right: 5px; }
.clock { width: 54px; display: flex; flex-direction: column; align-items: center; font-size: 8px; line-height: 12px; }
.peek { width: 7px; height: 25px; border: 1px solid #7590ac; background: #3d6a98; }
```

FILE: app.js
```js
const el = id => document.getElementById(id);
const icon = (name, cls = '') => `<svg class="${cls}" aria-hidden="true"><use href="#${name}"/></svg>`;

el('menu').innerHTML = ['文件(F)', '编辑(E)', '工程(P)', '音频(A)', 'MIDI(M)', '乐谱(S)', '媒体(D)', '运行控制(T)', '工作室(U)', '工作空间(W)', '窗口(I)', '帮助(H)']
  .map(t => `<button>${t}</button>`).join('');
el('tools').innerHTML = ['arrow', 'range', 'pencil', 'eraser', 'cut', 'glue', 'mute', 'lens', 'hand', 'comp', 'line', 'sound', 'bucket']
  .map((t, i) => `<button aria-label="${t}" class="${i ? '' : 'on'}">${icon(t)}</button>`).join('');

// Timeline space: X0..X0+W units across, 15 units per lane.
const X0 = 327, W = 782;
const pct = x => ((x - X0) / W * 100).toFixed(3) + '%';
const bars = [[1, 335], [3, 367], [5, 398], [7, 429], [9, 461], [11, 493], [13, 524], [15, 555], [17, 587], [19, 618], [21, 650], [23, 681], [25, 713], [27, 744], [29, 771], [31, 796], [33, 819], [35, 842], [37, 866], [39, 893], [41, 925], [43, 956], [45, 988], [47, 1019], [49, 1051], [51, 1082]];

el('ruler').innerHTML = bars.map(([n, x]) => `<span class="mark" style="left:${pct(x)}">${n}</span>`).join('')
  + `<svg class="locator" viewBox="0 0 10 16" style="left:${pct(444)}"><path d="M0 0h10L5 6z" fill="#fff"/><path d="M5 6v10" stroke="#777"/></svg>`;

let seed = 7;
const rnd = () => (seed = (seed * 16807) % 2147483647) / 2147483647;
const rep = (a, b, step, f) => { let s = ''; for (let x = a; x < b; x += step) s += f(x); return s; };
// motif shapes
const steps = (a, b, st, y) => rep(a, b, st, x => `M${x} ${y + 1}h2M${x + 3} ${y}h3M${x + 7} ${y - 1}h3`);
const dots = (a, b, st, y, v = 2) => rep(a, b, st, x => `M${x} ${(y + rnd() * v).toFixed(1)}h2`);
const wave = (a, b, y, v = 3) => { let s = `M${a} ${y}`; for (let x = a; x < b; x += 9) s += `l7 ${((rnd() - .5) * v).toFixed(1)}M${x + 8} ${(y + (rnd() - .5) * v).toFixed(1)}`; return s; };
const block = (a, b, y, h) => `M${a} ${y}H${b}V${y + h}H${a}z`;
const strings = () => wave(502, 545, 9) + wave(550, 700, 8) + wave(590, 640, 6, 1) + wave(700, 765, 9, 2) + wave(800, 880, 6, 2);
const climax = () => block(884, 900, 5, 5) + block(910, 925, 6, 4) + block(940, 956, 5, 5) + block(972, 988, 6, 4);
const swell = () => block(845, 878, 6, 3) + climax();

const T = (no, name, ev, o = {}) => ({ no, name, ev, ...o });
const F = (name, ev, o = {}) => ({ folder: 1, name, ev, ...o });
const rows = [
  F('Oc', [[335, 1051]], { sel: 1, b: block(335, 1051, 10, 3.5) + block(752, 1051, 4, 1) + block(752, 1051, 6.5, 1) + block(877, 1035, 3, 6) }),
  T(1, 'Guqin Grace', [[752, 823], [877, 1035]], { m: [2, 1], n: 'M760 6h22M783 8h22M893 7h16M924 6h16' }),
  T(2, 'Guqin Gou', [[803, 842]], { midi: 1, n: 'M807 7h23' }),
  T(3, 'Guzheng1', [[752, 1051]], { m: [2, 4], n: 'M755 8h10M762 7h45M812 7h25l10 1h30M932 4l10 7' }),
  T(4, 'Guzheng2', [[878, 1035]], { midi: 1, n: 'M893 7h16M924 5h16M956 7h16M988 10h12' }),
  T(5, 'Piano', [[335, 1051]], { m: [7, 5], n: steps(345, 705, 16, 8) + dots(760, 875, 4, 6, 4) + dots(890, 1005, 16, 10, 0), s: block(349, 353, 6, 4) + block(694, 702, 6, 3) }),
  T(6, 'Harp', [[335, 1051]], { n: wave(345, 370, 9) + rep(378, 700, 16, x => `M${x} 10l4-2 6-1`) + wave(755, 850, 8) + 'M932 5l10 5' }),
  F('Choir', [[524, 732], [752, 1049]], { b: block(524, 732, 4.5, 1) + block(752, 1049, 7, 1) + block(929, 1047, 10, 2) }),
  T(7, 'Wind Adey', [[524, 732]], { n: 'M562 6h25l20 1M626 6l14 2h14M658 6l20 1 20 2M696 5h32' }),
  T(8, 'Magic Choir', [[752, 1049]], { m: [3, 3], n: wave(757, 1000, 6, 2), s: block(758, 855, 6, 4) + swell() + block(855, 925, 7, 3) }),
  T(9, 'Full stac', [[929, 1047]], { n: dots(945, 1000, 4, 8) }),
  F('Percussion', [[335, 524], [524, 713], [752, 1049]], { b: block(335, 524, 5, 1) + block(335, 462, 7, 1) + block(540, 603, 9, 3) + block(689, 701, 6, 3) + block(335, 713, 12.5, 1) + block(772, 1049, 11.5, 2) + block(874, 1039, 4, 3) + block(856, 892, 9, 2) + block(756, 764, 6, 3) + block(827, 837, 6, 2) }),
  T(10, 'Triangle', [[335, 560], [752, 792], [874, 1039]], { n: 'M351 5h16M445 5h16M760 5h23M909 8h16M934 7h20M972 8h14M996 7h14' }),
  T(11, 'Chimes', [[335, 462], [689, 701], [756, 764], [827, 837]], { n: 'M350 9h3M382 9h3M414 9h3M445 9h6M694 9h3M758 9h3M830 9h4' }),
  T(12, 'Bass Drum', [[540, 603], [856, 892]], { n: 'M562 5h22M866 7h14' }),
  T(13, 'Taiko', [[524, 713], [772, 1049]], { n: wave(572, 700, 6, 4) + wave(780, 860, 7, 3) + wave(876, 1000, 5, 2) + wave(880, 1000, 9, 2), s: rep(878, 1000, 16, x => block(x, x + 10, 5, 3)) }),
  F('Woodwinds', [[437, 1049]], { b: block(437, 1049, 4, 6) + block(760, 1049, 10, 3) }),
  T(14, 'Flute leg', [[437, 1049]], { m: [7, 5], n: wave(444, 494, 8) + wave(520, 545, 7, 5) + wave(558, 705, 8) + 'M828 7l15 2h34', s: block(560, 586, 7, 3) + block(680, 700, 6, 4) + block(830, 856, 7, 2) }),
  T(15, 'Flute stac', [[437, 1049]], { midi: 1, n: wave(520, 560, 8) + dots(590, 700, 12, 6) + dots(770, 1000, 15, 6) }),
  T(16, 'Oboe leg', [[437, 1049]], { m: [2, 4], n: wave(560, 600, 8) + wave(680, 705, 6) + 'M840 6l12 3h25' }),
  T(17, 'Oboe stac', [[437, 1049]], { midi: 1, m: [2, 2], n: dots(765, 800, 5, 7) + dots(570, 600, 8, 8) }),
  T(18, 'Clarinet leg', [[760, 1049]], { n: wave(828, 880, 7) + wave(835, 870, 9) }),
  T(19, 'Clarinet stac', [[760, 1049]], { midi: 1 }),
  F('Brass', [[685, 713], [790, 1045]], { b: block(685, 713, 7, 1) + block(790, 888, 5, 1) + block(860, 1045, 8, 1) + block(860, 861, 2, 11) }),
  T(20, 'Full sus', [[685, 713], [790, 888]], { n: 'M689 7h10M701 9h10M800 8h14', s: block(828, 880, 6, 2) }),
  T(21, 'Full crescendo', [[860, 1045]], { midi: 1, n: 'M877 5h14M877 9h14M909 5h15M909 9h15M941 5h14M941 9h14M972 5h15M972 9h15' }),
  F('Strings', [[414, 1045]], { b: block(441, 1045, 4, 6) + block(630, 713, 10, 2) + block(756, 1045, 10, 2) }),
  T(22, 'Violins 1st', [[441, 1045]], { m: [5, 4], n: strings(), s: swell() + block(640, 665, 6, 4) }),
  T(23, 'Violins 2nd', [[441, 1045]], { n: strings(), s: swell() }),
  T(24, 'Violas', [[441, 1045]], { m: [3, 3], n: wave(450, 500, 8, 2) + strings() + wave(540, 700, 10, 2), s: block(845, 875, 6, 2) }),
  T(25, 'Cellos', [[441, 1045]], { m: [3, 5], n: wave(447, 560, 7, 4) + strings() + wave(880, 1000, 9, 2), s: swell() }),
  T(26, 'Basses', [[441, 1045]], { m: [4, 4], n: wave(444, 765, 9, 1) + wave(590, 700, 8, 3) + wave(880, 1000, 9, 1), s: block(828, 845, 7, 2) + swell() }),
  T(27, 'Basses piz', [[756, 1045]], { midi: 1, n: 'M762 7h2M776 7h2M844 8h2M876 8h2M900 8h2M930 8h2' }),
  T(28, 'Full stac', [[630, 713], [756, 1045]], { m: [1, 1], n: dots(636, 700, 5, 7, 3) + dots(760, 1000, 6, 7, 3), s: block(877, 890, 5, 5) + block(909, 922, 5, 5) + block(941, 954, 5, 5) + block(972, 986, 5, 5) }),
  T(29, 'Trills', [[414, 493], [630, 662], [678, 713], [893, 957]], { n: 'M430 7l12 2h10M635 7h20M640 10h15M682 6h16M685 9h22M926 7h16', s: block(640, 652, 7, 3) + block(924, 942, 7, 2) }),
];

const global = (ic, inner) => `<div class="row global"><div class="swatch">${icon(ic)}</div><div class="body">${inner}</div><div class="meter"></div></div>`;
el('tracks').innerHTML =
  global('closed', '<span class="name">输入/输出 通道</span>')
  + global('sig', `<button class="cell first" aria-label="锁定">${icon('unlock')}</button><span class="name">拍号</span><button class="cell lone" aria-label="拍号菜单">${icon('down')}</button>`)
  + global('note', `<button class="cell hot" aria-label="速度轨开关">${icon('power')}</button><button class="cell" aria-label="锁定">${icon('unlock')}</button><span class="name">速度</span><span class="tempoval">120.000</span><span class="tempoend">|–|</span>`)
  + rows.map(r => `<div class="row ${r.folder ? 'folder' : 'track'} ${r.midi ? 'midi' : ''} ${r.sel ? 'selected' : ''}">
      <div class="swatch">${r.folder ? icon('folder') : icon(r.midi ? 'midi' : 'keys') + `<b>${r.no}</b>`}</div>
      <div class="body"><button class="ms">m</button><button class="ms">s</button><span class="name">${r.name}</span></div>
      <div class="meter">${(r.m || []).map(h => `<i style="height:${h}px"></i>`).join('')}</div></div>`).join('')
  + '<div class="row folder sliver"><div class="swatch"></div></div>';

const lines = bars.map(([, x]) => `<line x1="${x}.5" x2="${x}.5" y1="0" y2="100"/>`).join('');
const vb = h => `viewBox="${X0} 0 ${W} ${h}" preserveAspectRatio="none"`;
const flag = (t, x) => `<span class="flag" style="left:${pct(x)}">${t}</span>`;
el('lanes').innerHTML =
  `<svg class="underlay" ${vb(100)}><defs><linearGradient id="g" x1="0" y1="0" x2="0" y2="1"><stop offset="0" stop-color="#e6edb9"/><stop offset=".3" stop-color="#d6dfa0"/><stop offset="1" stop-color="#ccd68f"/></linearGradient></defs>${lines}</svg>`
  + '<div class="lane"></div>'
  + `<div class="lane">${flag('4/4', 335)}${flag('6/8', 760)}${flag('4/4', 878)}</div>`
  + `<div class="lane"><svg ${vb(15)}><path d="M335 7.500H1107" stroke="#8f9a55"/><path d="M334 6h3v3h-3zM877 6h3v3h-3z" fill="#dce98f"/></svg></div>`
  + rows.map(r => `<div class="lane"><svg ${vb(15)}>
      ${r.ev.map(([a, b]) => `<path d="M${a} 0.500H${b}V14.500H${a}z" fill="#3a3f22"/><path d="M${a} 1.500H${b}V13.500H${a}z" fill="url(#g)"/>`).join('')}
      <path class="ev-band" d="${r.b || ''}"/><path class="ev-soft" d="${r.s || ''}"/><path class="ev-note" d="${r.n || ''}"/></svg></div>`).join('')
  + `<svg class="strip" ${vb(3)}><path d="M335 0H1045V3H335z" fill="#dce5a8"/></svg>`
  + `<svg class="overlay" ${vb(100)}>${lines}</svg><i class="cursor" style="left:${pct(799)}"></i>`;
el('ruler').insertAdjacentHTML('beforeend', `<i class="cursor" style="left:${pct(799)}"></i>`);

const slots = [['Piano', 1], ['Harp'], ['Arctic pad'], ['Space Glas1'], ['Violins 1st', 1], ['Violins 2nd']];
el('slots').innerHTML = slots.map(([name, live], i) => {
  const css = i === 4, last = i === slots.length - 1;
  const params = css ? ['VelXFade', 'Vib Ctrl', 'Port Vol', 'Volume', 'CSS 2n', 'CSS 2n', 'CSS 2n', 'CSS 2n'] : ['#000', '#001', '#002', '#003'];
  return `<section class="slot ${i === 2 ? 'picked' : ''}"><span class="no">${i + 1}</span><div class="mid">
    <div class="screen"><div class="minis">${icon('power', 'pw')}${icon('edit')}${icon('snap')}<span>R</span><span>W</span></div>
    <div class="title"><p>${name}</p><p class="syn">KntkSP648</p><p class="page">Page 1</p>${icon('down', live ? 'live' : '')}</div>
    ${last ? '' : `<div class="params ${css ? 'two' : ''}">${params.map(p => `<span>${p}</span>`).join('')}</div>`}</div>
    ${last ? '' : `<div class="knobs">${[0, 1, 2, 3].map(k => icon(css && k ? 'knobfull' : 'knob')).join('')}</div>`}</div>
    <div class="end">${icon('capw')}${icon('turn')}</div></section>`;
}).join('');
```
